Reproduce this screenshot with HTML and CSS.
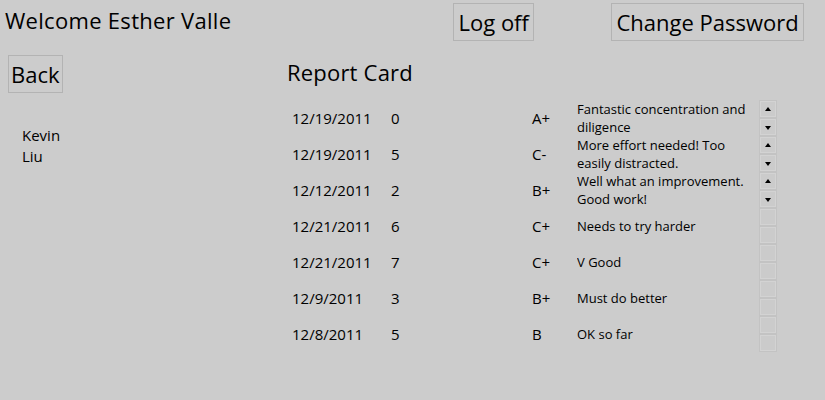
FILE: index.html
```html
<!DOCTYPE html>
<html>
<head>
<meta charset="utf-8">
<title>Report Card</title>
<link rel="stylesheet" href="styles.css">
</head>
<body>
<div class="top">
  <div class="welcome">Welcome Esther Valle</div>
  <button class="btn wide">Log off</button>
  <button class="btn wide">Change Password</button>
</div>
<div class="main">
  <div class="side">
    <button class="btn back">Back</button>
    <div class="student">Kevin<br>Liu</div>
  </div>
  <div class="card">
    <h1 class="title">Report Card</h1>
    <div class="rows">
      <div class="row">
        <span class="date">12/19/2011</span><span class="score">0</span><span class="grade">A+</span>
        <div class="comment">Fantastic concentration and diligence</div>
        <div class="scroll"><span class="sb up"></span><span class="sb down"></span></div>
      </div>
      <div class="row">
        <span class="date">12/19/2011</span><span class="score">5</span><span class="grade">C-</span>
        <div class="comment">More effort needed! Too easily distracted.</div>
        <div class="scroll"><span class="sb up"></span><span class="sb down"></span></div>
      </div>
      <div class="row">
        <span class="date">12/12/2011</span><span class="score">2</span><span class="grade">B+</span>
        <div class="comment">Well what an improvement. Good work!</div>
        <div class="scroll"><span class="sb up"></span><span class="sb down"></span></div>
      </div>
      <div class="row">
        <span class="date">12/21/2011</span><span class="score">6</span><span class="grade">C+</span>
        <div class="comment single">Needs to try harder</div>
        <div class="scroll"><span class="sb"></span><span class="sb"></span></div>
      </div>
      <div class="row">
        <span class="date">12/21/2011</span><span class="score">7</span><span class="grade">C+</span>
        <div class="comment single">V Good</div>
        <div class="scroll"><span class="sb"></span><span class="sb"></span></div>
      </div>
      <div class="row">
        <span class="date">12/9/2011</span><span class="score">3</span><span class="grade">B+</span>
        <div class="comment single">Must do better</div>
        <div class="scroll"><span class="sb"></span><span class="sb"></span></div>
      </div>
      <div class="row">
        <span class="date">12/8/2011</span><span class="score">5</span><span class="grade">B</span>
        <div class="comment single">OK so far</div>
        <div class="scroll"><span class="sb"></span><span class="sb"></span></div>
      </div>
    </div>
  </div>
</div>
</body>
</html>
```

FILE: styles.css
```css
html, body {
  margin: 0;
  padding: 0;
  background: #cccccc;
  color: #000;
  font-family: "Segoe UI", "Open Sans", "Noto Sans", sans-serif;
  height: 100%;
}

.top {
  display: grid;
  grid-template-columns: 453px 158px auto;
  align-items: start;
  height: 50px;
  padding-top: 3px;
  box-sizing: border-box;
}

.welcome {
  font-size: 22px;
  line-height: 30px;
  padding-left: 5px;
  margin-top: 2px;
  letter-spacing: 0.3px;
}

.btn {
  font-family: inherit;
  font-size: 22px;
  line-height: 30px;
  color: #000;
  background: #cccccc;
  border: 1px solid #b3b3b3;
  padding: 3px 2px;
  margin: 0;
  justify-self: start;
}

.btn.wide {
  padding: 3px 4.5px;
}

.main {
  display: grid;
  grid-template-columns: 287px 1fr;
}

.side {
  display: flex;
  flex-direction: column;
  align-items: flex-start;
}

.back {
  margin-top: 5px;
  margin-left: 8px;
}

.student {
  font-size: 15px;
  line-height: 21px;
  margin-top: 32px;
  margin-left: 22px;
}

.title {
  font-size: 22px;
  font-weight: normal;
  line-height: 30px;
  margin: 7px 0 13px 0;
  letter-spacing: 0.2px;
}

.rows {
  display: flex;
  flex-direction: column;
}

.row {
  display: flex;
  align-items: center;
  height: 36px;
  font-size: 15px;
}

.date {
  width: 99px;
  padding-left: 5px;
}

.score {
  width: 141px;
}

.grade {
  width: 45px;
}

.comment {
  width: 182px;
  font-size: 13px;
  line-height: 18px;
  height: 36px;
  overflow: hidden;
}

.comment.single {
  line-height: 36px;
}

.scroll {
  display: flex;
  flex-direction: column;
  width: 18px;
  height: 36px;
}

.sb {
  position: relative;
  height: 18px;
  width: 18px;
  box-sizing: border-box;
  border: 1px solid #c3c3c3;
  box-shadow: inset 0 0 0 1px #d3d3d3;
  background: #cbcbcb;
}

.sb.up::after,
.sb.down::after {
  content: "";
  position: absolute;
  left: 5px;
  width: 0;
  height: 0;
  border-left: 3.5px solid transparent;
  border-right: 3.5px solid transparent;
}

.sb.up::after {
  top: 6px;
  border-bottom: 4px solid #000;
}

.sb.down::after {
  top: 7px;
  border-top: 4px solid #000;
}
```
